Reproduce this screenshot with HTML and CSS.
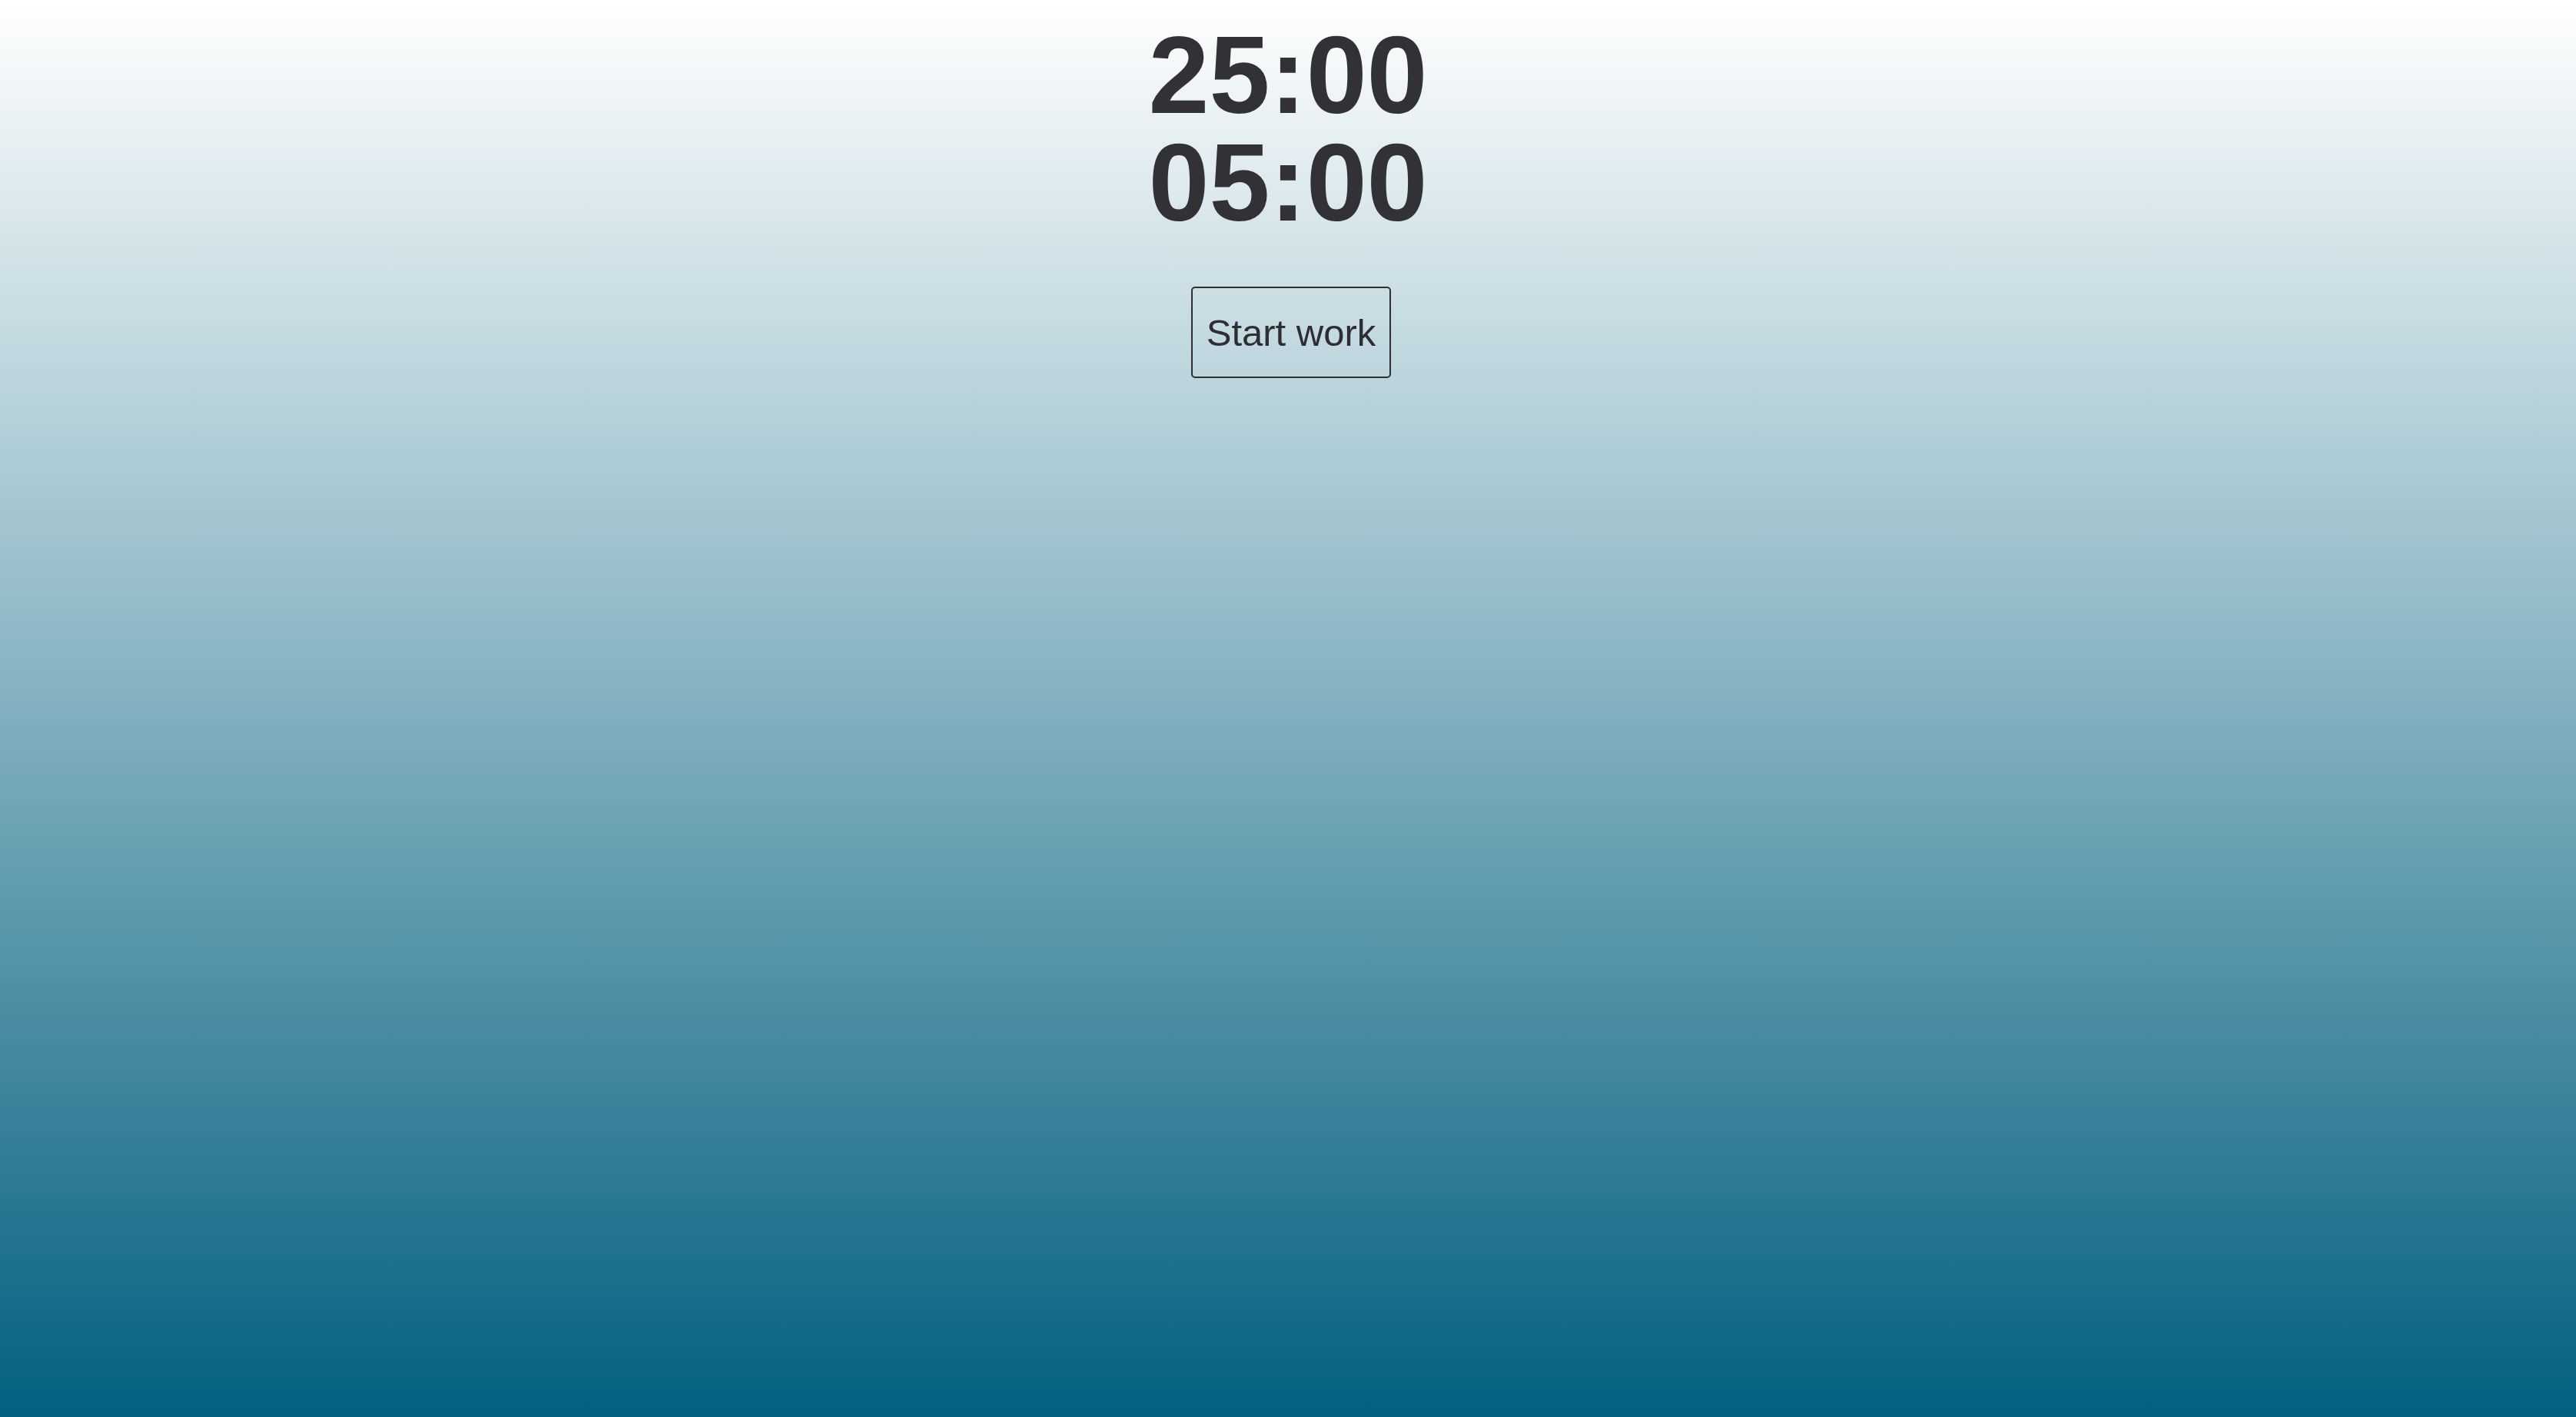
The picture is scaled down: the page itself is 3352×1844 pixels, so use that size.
FILE: index.html
```html
<!DOCTYPE html>
<html lang="en">
<head>
<meta charset="utf-8">
<title>Pomodoro</title>
<link rel="stylesheet" href="styles.css">
</head>
<body>
<main class="app">
  <div class="timers">
    <div class="timer">25:00</div>
    <div class="timer">05:00</div>
  </div>
  <button class="start-btn" type="button">Start work</button>
</main>
</body>
</html>
```

FILE: styles.css
```css
html, body {
  margin: 0;
  padding: 0;
}
body {
  min-height: 100vh;
  background: linear-gradient(to bottom, #ffffff 0%, #03607f 100%);
  font-family: "Liberation Sans", Arial, sans-serif;
  color: #323236;
}
.app {
  display: flex;
  flex-direction: column;
  align-items: center;
  padding-top: 28px;
}
.timers {
  display: flex;
  flex-direction: column;
  align-items: center;
}
.timer {
  font-size: 142px;
  line-height: 140px;
  font-weight: 700;
}
.start-btn {
  margin-top: 65px;
  margin-left: 8px;
  font-family: "Liberation Sans", Arial, sans-serif;
  font-size: 49px;
  color: #2e2e32;
  background: transparent;
  border: 2px solid #2e2e32;
  border-radius: 5px;
  padding: 30px 18px 29px;
  line-height: normal;
  cursor: pointer;
}
```
